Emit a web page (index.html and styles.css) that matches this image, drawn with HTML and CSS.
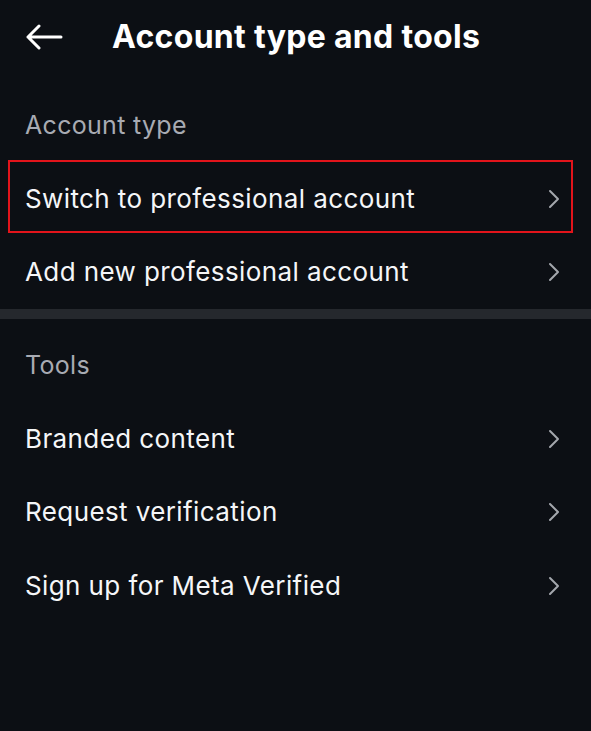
FILE: index.html
```html
<!DOCTYPE html>
<html>
<head>
<meta charset="utf-8">
<link rel="stylesheet" href="styles.css">
</head>
<body>
<div class="screen">
  <header class="topbar">
    <svg class="back" width="38" height="26" viewBox="0 0 38 26"><path d="M36 13H3M14 2L3 13l11 11" fill="none" stroke="#fff" stroke-width="3" stroke-linecap="round" stroke-linejoin="round"/></svg>
    <h1 class="title">Account type and tools</h1>
  </header>

  <section class="section first">
    <div class="section-label">Account type</div>
    <div class="row highlighted"><span class="row-text">Switch to professional account</span><svg class="chev" width="12" height="20" viewBox="0 0 12 20"><path d="M2 2l8 8-8 8" fill="none" stroke="#a4a7ad" stroke-width="2" stroke-linecap="round" stroke-linejoin="round"/></svg></div>
    <div class="row"><span class="row-text">Add new professional account</span><svg class="chev" width="12" height="20" viewBox="0 0 12 20"><path d="M2 2l8 8-8 8" fill="none" stroke="#a4a7ad" stroke-width="2" stroke-linecap="round" stroke-linejoin="round"/></svg></div>
  </section>

  <div class="divider"></div>

  <section class="section second">
    <div class="section-label">Tools</div>
    <div class="row"><span class="row-text">Branded content</span><svg class="chev" width="12" height="20" viewBox="0 0 12 20"><path d="M2 2l8 8-8 8" fill="none" stroke="#a4a7ad" stroke-width="2" stroke-linecap="round" stroke-linejoin="round"/></svg></div>
    <div class="row"><span class="row-text">Request verification</span><svg class="chev" width="12" height="20" viewBox="0 0 12 20"><path d="M2 2l8 8-8 8" fill="none" stroke="#a4a7ad" stroke-width="2" stroke-linecap="round" stroke-linejoin="round"/></svg></div>
    <div class="row"><span class="row-text">Sign up for Meta Verified</span><svg class="chev" width="12" height="20" viewBox="0 0 12 20"><path d="M2 2l8 8-8 8" fill="none" stroke="#a4a7ad" stroke-width="2" stroke-linecap="round" stroke-linejoin="round"/></svg></div>
  </section>
</div>
</body>
</html>
```

FILE: styles.css
```css
html, body {
  margin: 0;
  padding: 0;
  background: #0c0f14;
}
body {
  font-family: Inter, "Noto Sans", "Liberation Sans", sans-serif;
  color: #f5f6f8;
}
.screen {
  width: 591px;
  height: 731px;
  background: #0c0f14;
}
.topbar {
  height: 74px;
  display: flex;
  align-items: center;
  padding-left: 25px;
  box-sizing: border-box;
}
.back {
  display: block;
  flex: none;
}
.title {
  margin: 0 0 0 49px;
  font-size: 32px;
  font-weight: 700;
  line-height: 36px;
  color: #ffffff;
  letter-spacing: 0.3px;
}
.section-label {
  padding-left: 25px;
  font-size: 25px;
  line-height: 30px;
  letter-spacing: 0.3px;
  color: #a8abb3;
}
.first .section-label {
  padding-top: 36px;
  padding-bottom: 22px;
}
.second .section-label {
  padding-top: 31px;
  padding-bottom: 22px;
}
.row {
  height: 73.5px;
  display: flex;
  align-items: center;
  justify-content: space-between;
  padding: 0 31px 0 25px;
  position: relative;
}
.row-text {
  font-size: 26px;
  line-height: 30px;
  letter-spacing: 0.4px;
  color: #f5f6f8;
}
.chev {
  display: block;
  flex: none;
}
.highlighted::after {
  content: "";
  position: absolute;
  left: 8px;
  right: 18px;
  top: -2px;
  bottom: 3px;
  border: 2px solid #e3141b;
  pointer-events: none;
}
.divider {
  height: 10px;
  background: #25282d;
}
```
